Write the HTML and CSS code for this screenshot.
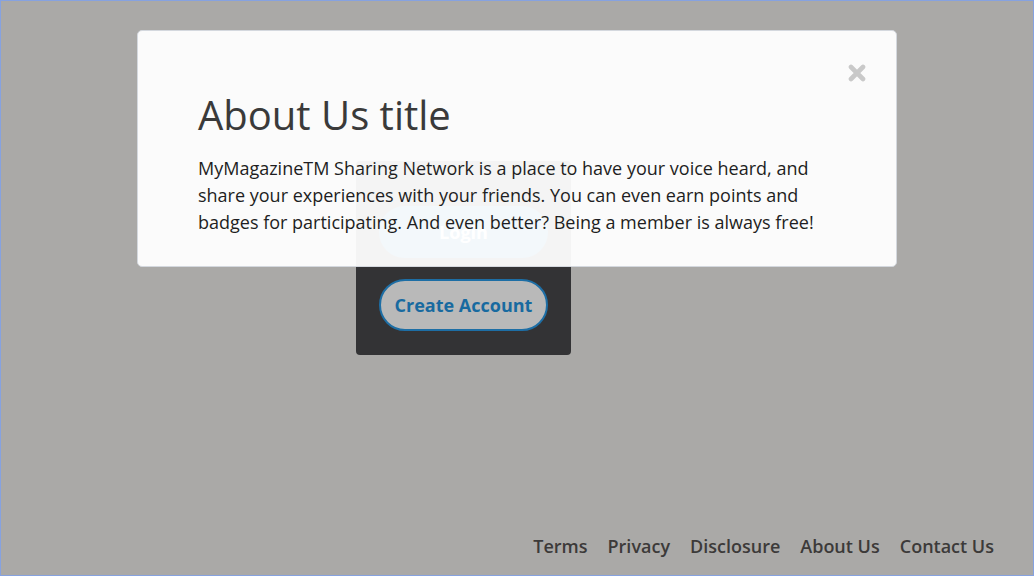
FILE: index.html
```html
<!DOCTYPE html>
<html lang="en">
<head>
<meta charset="utf-8">
<title>About Us</title>
<link rel="stylesheet" href="styles.css">
</head>
<body>
<div class="page">
  <main class="main">
    <div class="card">
      <button class="btn btn-login">Login</button>
      <button class="btn btn-create">Create Account</button>
    </div>
  </main>
  <footer class="footer">
    <a href="#">Terms</a>
    <a href="#">Privacy</a>
    <a href="#">Disclosure</a>
    <a href="#">About Us</a>
    <a href="#">Contact Us</a>
  </footer>
</div>
<div class="modal">
  <button class="close" aria-label="Close">
    <svg width="18" height="18" viewBox="0 0 18 18"><path d="M3 3 L15 15 M15 3 L3 15" stroke="#c9c9c9" stroke-width="4.6" stroke-linecap="round"/></svg>
  </button>
  <h1 class="modal-title">About Us title</h1>
  <p class="modal-text">MyMagazineTM Sharing Network is a place to have your voice heard, and share your experiences with your friends. You can even earn points and badges for participating. And even better? Being a member is always free!</p>
</div>
</body>
</html>
```
FILE: styles.css
```css
* { box-sizing: border-box; }
html, body { margin: 0; padding: 0; }
body {
  font-family: "Open Sans", "Liberation Sans", sans-serif;
  width: 1034px;
  height: 576px;
  overflow: hidden;
  position: relative;
}
.page {
  height: 576px;
  border: 1px solid #86a2e0;
  background: #aaa9a7;
  display: flex;
  flex-direction: column;
}
.main {
  padding-top: 160px;
  padding-left: 355px;
}
.card {
  width: 215px;
  background: #333335;
  border-radius: 4px;
  padding: 45px 23px 24px;
  display: flex;
  flex-direction: column;
  gap: 21px;
}
.btn {
  height: 52px;
  border-radius: 26px;
  font-family: "Open Sans", "Liberation Sans", sans-serif;
  font-weight: 700;
  font-size: 18px;
  cursor: pointer;
}
.btn-login {
  background: #1a74b0;
  border: 2px solid #1a74b0;
  color: #fff;
}
.btn-create {
  background: #b9b9b9;
  border: 2px solid #1d6ea5;
  color: #186aa0;
}
.footer {
  margin-top: auto;
  display: flex;
  justify-content: flex-end;
  gap: 20px;
  padding: 0 39px 17px 0;
}
.footer a {
  color: #3c3a39;
  text-decoration: none;
  font-size: 18px;
  font-weight: 600;
  line-height: 24px;
}
.modal {
  position: absolute;
  left: 137px;
  top: 30px;
  width: 760px;
  height: 237px;
  background: rgba(255, 255, 255, 0.95);
  border: 1px solid #d4d8de;
  border-radius: 5px;
  padding: 52px 60px 0 60px;
}
.close {
  position: absolute;
  top: 33px;
  right: 30px;
  width: 18px;
  height: 18px;
  padding: 0;
  border: 0;
  background: none;
}
.close svg { display: block; }
.modal-title {
  margin: 0 0 8px;
  font-size: 40px;
  font-weight: 400;
  line-height: 64px;
  color: #3a3a3a;
}
.modal-text {
  margin: 0;
  font-size: 18px;
  line-height: 27px;
  color: #1e1e22;
}
```
